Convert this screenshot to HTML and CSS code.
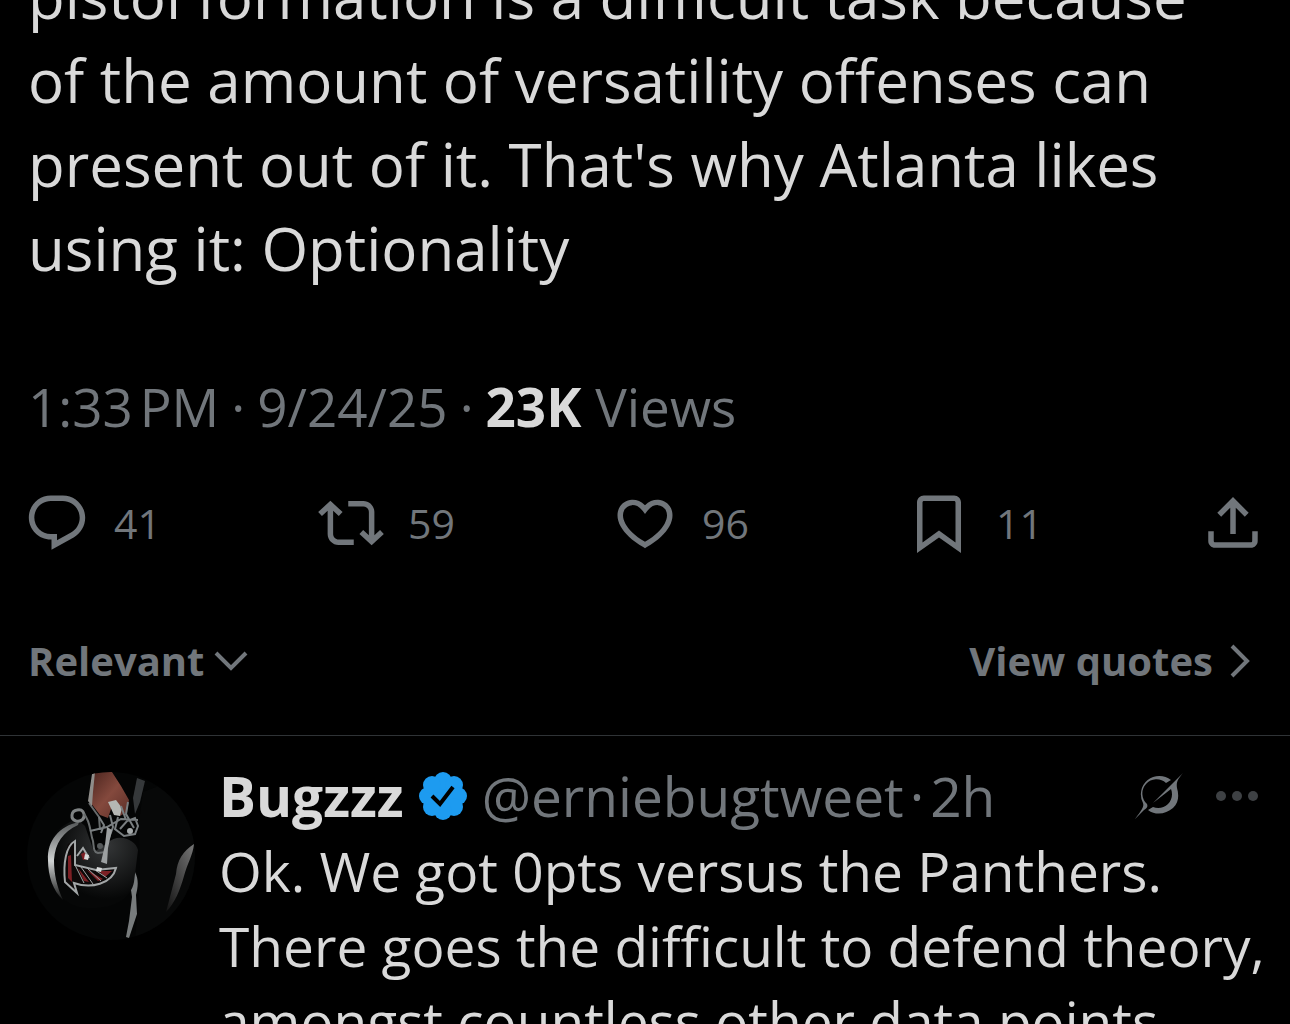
FILE: index.html
```html
<!DOCTYPE html>
<html lang="en">
<head>
    <meta charset="UTF-8">
    <meta name="viewport" content="width=device-width, initial-scale=1.0">
    <title>Post</title>
    <link rel="stylesheet" href="styles.css">
</head>
<body>
    <main class="thread">
        <article class="post">
            <p class="post-text">
                pistol formation is a difficult task because<br>
                of the amount of versatility offenses can<br>
                present out of it. That's why Atlanta likes<br>
                using it: Optionality
            </p>
            <div class="post-meta">
                <time>1:33&#8239;PM</time>
                <span class="meta-dot">·</span>
                <time>9/24/25</time>
                <span class="meta-dot">·</span>
                <a href="#"><strong>23K</strong> Views</a>
            </div>
        </article>

        <div class="actions">
            <button class="action" aria-label="Reply">
                <svg class="icon" viewBox="0 0 24 24"><path d="M1.751 10c0-4.42 3.584-8 8.005-8h4.366c4.49 0 8.129 3.64 8.129 8.13 0 2.96-1.607 5.68-4.196 7.11l-8.054 4.46v-3.69h-.067c-4.49.1-8.183-3.51-8.183-8.01zm8.005-6c-3.317 0-6.005 2.69-6.005 6 0 3.37 2.77 6.08 6.138 6.01l.351-.01h1.761v2.3l5.087-2.81c1.951-1.08 3.163-3.13 3.163-5.36 0-3.39-2.744-6.13-6.129-6.13H9.756z"/></svg>
                <span>41</span>
            </button>
            <button class="action" aria-label="Repost">
                <svg class="icon" viewBox="0 0 24 24"><path d="M4.5 3.88l4.432 4.14-1.364 1.46L5.5 7.55V16c0 1.1.896 2 2 2H13v2H7.5c-2.209 0-4-1.79-4-4V7.55L1.432 9.48.068 8.02 4.5 3.88zM16.5 6H11V4h5.5c2.209 0 4 1.79 4 4v8.45l2.068-1.93 1.364 1.46-4.432 4.14-4.432-4.14 1.364-1.46 2.068 1.93V8c0-1.1-.896-2-2-2z"/></svg>
                <span>59</span>
            </button>
            <button class="action" aria-label="Like">
                <svg class="icon" viewBox="0 0 24 24"><path d="M16.697 5.5c-1.222-.06-2.679.51-3.89 2.16l-.805 1.09-.806-1.09C9.984 6.01 8.526 5.44 7.304 5.5c-1.243.07-2.349.78-2.91 1.91-.552 1.12-.633 2.78.479 4.82 1.074 1.97 3.257 4.27 7.129 6.61 3.87-2.34 6.052-4.64 7.126-6.61 1.111-2.04 1.03-3.7.477-4.82-.561-1.13-1.666-1.84-2.908-1.91zm4.187 7.69c-1.351 2.48-4.001 5.12-8.379 7.67l-.503.3-.504-.3c-4.379-2.55-7.029-5.19-8.382-7.67-1.36-2.5-1.41-4.86-.514-6.67.887-1.79 2.647-2.91 4.601-3.01 1.651-.09 3.368.56 4.798 2.01 1.429-1.45 3.146-2.1 4.796-2.01 1.954.1 3.714 1.22 4.601 3.01.896 1.81.846 4.17-.514 6.67z"/></svg>
                <span>96</span>
            </button>
            <button class="action" aria-label="Bookmark">
                <svg class="icon" viewBox="0 0 24 24"><path d="M4 4.5C4 3.12 5.119 2 6.5 2h11C18.881 2 20 3.12 20 4.5v18.44l-8-5.71-8 5.71V4.5zM6.5 4c-.276 0-.5.22-.5.5v14.56l6-4.29 6 4.29V4.5c0-.28-.224-.5-.5-.5h-11z"/></svg>
                <span>11</span>
            </button>
            <button class="action" aria-label="Share">
                <svg class="icon" viewBox="0 0 24 24"><path d="M12 2.59l5.7 5.7-1.41 1.42L13 6.41V16h-2V6.41l-3.3 3.3-1.41-1.42L12 2.59zM21 15l-.02 3.51c0 1.38-1.12 2.49-2.5 2.49H5.5C4.11 21 3 19.88 3 18.5V15h2v3.5c0 .28.22.5.5.5h12.98c.28 0 .5-.22.5-.5L19 15h2z"/></svg>
            </button>
        </div>

        <div class="sort-bar">
            <button class="sort">
                Relevant
                <svg class="chevron" viewBox="0 0 36 36"><path d="M3 10l15 15 15-15"/></svg>
            </button>
            <a class="quotes" href="#">
                View quotes
                <svg class="chevron" viewBox="0 0 36 36"><path d="M10 3l15 15-15 15"/></svg>
            </a>
        </div>

        <article class="reply">
            <svg class="avatar" viewBox="0 0 168 168" role="img" aria-label="Bugzzz">
                <defs>
                    <clipPath id="round"><circle cx="84" cy="84" r="84"/></clipPath>
                    <linearGradient id="hand" x1="0" y1="0" x2="1" y2="1">
                        <stop offset="0" stop-color="#4a241e"/>
                        <stop offset="0.5" stop-color="#84493d"/>
                        <stop offset="1" stop-color="#5a2d26"/>
                    </linearGradient>
                    <linearGradient id="sleeve" x1="1" y1="0" x2="0" y2="1">
                        <stop offset="0" stop-color="#777"/>
                        <stop offset="1" stop-color="#111"/>
                    </linearGradient>
                    <linearGradient id="rim" x1="0" y1="0" x2="0" y2="1">
                        <stop offset="0" stop-color="#555859"/>
                        <stop offset="0.5" stop-color="#d0d3d3"/>
                        <stop offset="1" stop-color="#151616"/>
                    </linearGradient>
                    <radialGradient id="shell" cx="0.65" cy="0.3" r="0.6">
                        <stop offset="0" stop-color="#343637"/>
                        <stop offset="1" stop-color="#060707"/>
                    </radialGradient>
                </defs>
                <g clip-path="url(#round)">
                    <rect width="168" height="168" fill="#040505"/>
                    <!-- player's side -->
                    <path d="M110 6l8 3-5 21-5 12-2-16z" fill="#35383a"/>
                    <path d="M112 50l4-30 52-20v168h-60l5-60z" fill="#070808"/>
                    <path d="M167 72c-11 7-17 16-18 30l-10 38c9-9 14-22 18-36 3-12 9-21 10-32z" fill="url(#sleeve)"/>
                    <path d="M108 100c4 8 3 15 1 23l1 19-8 24-3-1 3-16 3-24-2-14z" fill="#787c7d"/>
                    <!-- helmet -->
                    <path d="M50 47C30 54 20 68 21 86c0 32 17 50 43 50 24 0 40-10 43-26l4-32c-2-10-19-18-31-7l-13 9-9-26z" fill="url(#shell)"/>
                    <path d="M52 50C32 54 20 69 21 88c0 16 5 31 15 40-6-13-9-25-9-40 1-17 9-28 24-35z" fill="url(#rim)"/>
                    <path d="M50 38c-6 1-7 9-1 11 6 1 9-3 8-7s-4-5-7-4z" fill="none" stroke="#7e8283" stroke-width="3"/>
                    <path d="M57 42c7 8 6 19 9 27 1 6 0 11 5 12l8-1M62 31l10 14 1 13" fill="none" stroke="#686c6d" stroke-width="2"/>
                    <!-- hand -->
                    <path d="M66 0h19l9 14 8 14-2 12-7 4-8-10-4 12-8-3-10-13z" fill="url(#hand)"/>
                    <path d="M65 2l-4 27 4 5 1-14 2-20z" fill="#8f8d8a"/>
                    <path d="M81 30l8-2 6 8-2 8-6-1z" fill="#b5b7b4"/>
                    <!-- face mask -->
                    <path d="M63 59l17-4 14-8 17 1M83 43l3 12-4 11M91 45l-3 12 9 7 11-2 3-8-3-8-8 3-7 8M101 30l-2 12 8 14M94 34l5 14M72 45l5 8-3 8" fill="none" stroke="#797e80" stroke-width="2"/>
                    <path d="M80 55l5 3-4 18-1 16-6-2 4-17z" fill="#9ca0a1"/>
                    <circle cx="103" cy="59" r="3" fill="#a5aaab"/>
                    <circle cx="73" cy="74" r="3" fill="#55595a"/>
                    <!-- falcon decal -->
                    <path d="M41 72l7-3v24l21 5 20-2c-3 13-16 22-39 16v9L38 110c-2-14-1-27 3-38z" fill="#0d0909"/>
                    <path d="M41 84l3-1 1 27-4-4zM51 96l6 13 5 1zM60 98l11 11 5-2zM72 99l6 6 7-6zM54 82l4-2 3 7-5 1z" fill="#7c1f24"/>
                    <path d="M48 69c-9 5-12 22-10 41l12 11-3-10c17 6 38 1 42-15l-20 2-21-5V69zM50 84l6-8 6 10" fill="none" stroke="#a2a6a7" stroke-width="2"/>
                    <path d="M48 93l9 18M54 95l12 17M61 97l13 12M68 98l12 8" fill="none" stroke="#a2a6a7" stroke-width="1"/>
                    <path d="M58 82l4 1-1 5-4-1zM70 95l5 1-1 4-5-1z" fill="#d8dada"/>
                </g>
            </svg>

            <div class="reply-body">
                <header class="reply-header">
                    <a class="name" href="#">Bugzzz</a>
                    <svg class="badge" viewBox="0 0 50 50" role="img" aria-label="Verified account">
                        <g fill="#1d9bf0">
                            <circle cx="25" cy="25" r="18"/>
                            <circle cx="25" cy="10" r="9"/>
                            <circle cx="36" cy="14" r="9"/>
                            <circle cx="40" cy="25" r="9"/>
                            <circle cx="36" cy="36" r="9"/>
                            <circle cx="25" cy="40" r="9"/>
                            <circle cx="14" cy="36" r="9"/>
                            <circle cx="10" cy="25" r="9"/>
                            <circle cx="14" cy="14" r="9"/>
                        </g>
                        <path d="M14 25l8 8 13-17" fill="none" stroke="#000" stroke-width="4"/>
                    </svg>
                    <span class="handle">@erniebugtweet</span>
                    <span class="dot">·</span>
                    <time class="age">2h</time>
                    <button class="tool grok" aria-label="Explain this post">
                        <svg viewBox="0 0 50 50"><path d="M37 9A18.500 18.500 0 0 0 9 32c1 3 0 6-8 16l9-9c3-2 4-3 3-6A14 14 0 0 1 32 12zM19 32l18-14c2 5 1 11-3 15-4 4-10 5-15 3l-5 3c8 6 18 4 25-2 6-6 6-13 4-20-1-6 1-9 6-15z"/></svg>
                    </button>
                    <button class="tool more" aria-label="More">
                        <svg viewBox="0 0 42 10"><circle cx="5" cy="5" r="5"/><circle cx="21" cy="5" r="5"/><circle cx="37" cy="5" r="5"/></svg>
                    </button>
                </header>
                <p class="reply-text">
                    Ok. We got 0pts versus the Panthers.<br>
                    There goes the difficult to defend theory,<br>
                    amongst countless other data points
                </p>
            </div>
        </article>
    </main>
</body>
</html>
```
FILE: styles.css
```css
* {
    box-sizing: border-box;
}
body {
    margin: 0;
    background-color: #000;
    color: #d9d9d9;
    font-family: "Open Sans", "Noto Sans", sans-serif;
}
a {
    color: inherit;
    text-decoration: none;
}
button {
    padding: 0;
    border: none;
    background: none;
    color: inherit;
    font: inherit;
    cursor: pointer;
}
p {
    margin: 0;
}
svg {
    display: block;
    flex-shrink: 0;
}
.thread {
    height: 100vh;
    overflow: hidden;
    color: #71767b;
}
/* the thread is scrolled part-way into the post */
.post {
    margin-top: -46px;
    padding: 0 28px;
}
.post-text {
    color: #d9d9d9;
    font-size: 60px;
    line-height: 84px;
    white-space: nowrap;
}
.post-meta {
    display: flex;
    margin-top: 81px;
    font-size: 53px;
    line-height: 72px;
}
.meta-dot {
    margin: 0 12px;
}
.post-meta strong {
    color: #d9d9d9;
}
.actions {
    display: grid;
    grid-template-columns: repeat(4, 1fr) auto;
    margin-top: 47px;
    padding: 0 24px;
}
.action {
    display: flex;
    align-items: center;
    gap: 24px;
    font-size: 41px;
    line-height: 56px;
}
.icon {
    width: 66px;
    height: 66px;
    fill: currentColor;
}
.sort-bar {
    display: flex;
    justify-content: space-between;
    padding: 77px 32px 46px 28px;
    border-bottom: 1px solid #2f3336;
    font-size: 40px;
    font-weight: bold;
    line-height: 56px;
}
.sort,
.quotes {
    display: flex;
    align-items: center;
    gap: 9px;
}
.chevron {
    width: 36px;
    height: 36px;
    fill: none;
    stroke: currentColor;
    stroke-width: 4;
}
.reply {
    display: flex;
    gap: 24px;
    padding: 22px 32px 22px 27px;
    font-size: 55px;
    line-height: 75px;
}
.avatar {
    width: 168px;
    height: 168px;
    margin-top: 14px;
}
.reply-body {
    flex: 1;
    min-width: 0;
}
.reply-header {
    display: flex;
    align-items: center;
}
.name {
    color: #d9d9d9;
    font-weight: bold;
}
.badge {
    width: 50px;
    height: 50px;
    margin: 0 14px;
}
.dot {
    margin: 0 6px;
}
.tool svg {
    fill: currentColor;
}
.grok {
    margin-left: auto;
}
.grok svg {
    width: 50px;
    height: 50px;
}
.more {
    margin-left: 32px;
    color: #3e4144;
}
.more svg {
    width: 42px;
    height: 10px;
}
.reply-text {
    color: #d9d9d9;
    white-space: nowrap;
}
```
